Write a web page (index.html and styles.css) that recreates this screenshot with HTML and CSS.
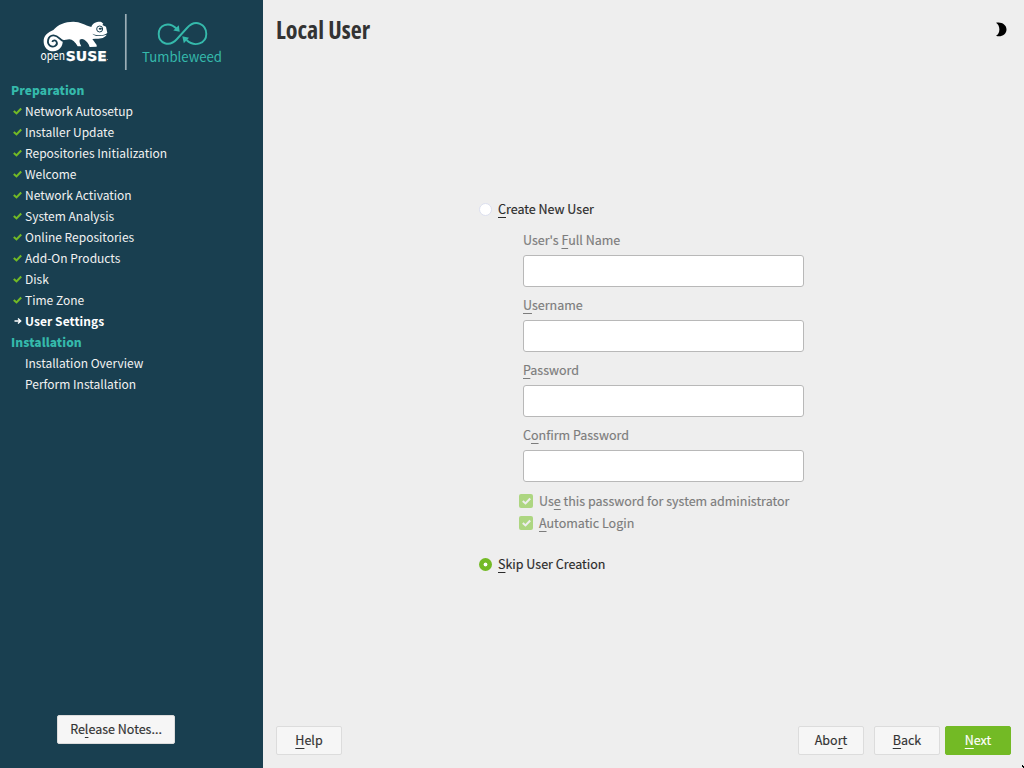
FILE: index.html
```html
<!DOCTYPE html>
<html lang="en">
<head>
<meta charset="utf-8">
<title>Local User</title>
<link rel="stylesheet" href="styles.css">
</head>
<body>
<svg class="defs" width="0" height="0"><defs>
<symbol id="check" viewBox="0 0 9 8"><path d="M.8 3.9 3.5 6.4 8.2 1.5" fill="none" stroke="currentColor" stroke-width="2.1"/></symbol>
</defs></svg>
<div class="installer">
<aside class="sidebar">
<svg class="brand" width="263" height="79" viewBox="0 0 263 79">
<g transform="translate(30 5) scale(.33333)">
<path fill="#fff" d="M41 111C40 92 53 82 70 75C84 59 104 50 130 50C151 50 164 60 184 66C187 55 202 49 214 51L220 56L217 60L228 65L232 84C222 92 204 94 187 86C194 95 213 94 230 89C225 99 209 102 196 101L187 102L200 120L200 125L179 126C176 115 169 108 163 104C158 101 154 101 149 104C147 113 152 119 154 124L143 124C137 113 127 103 118 103L98 106C100 123 88 139 70 139C53 139 42 127 41 111Z"/>
<path fill="none" stroke="#193f50" stroke-width="5.500" d="M102 108C91 110 87 90 70 91C52 92 50 115 60 122C70 129 84 121 80 111C77 104 68 105 67 111"/>
<circle cx="209" cy="72" r="9" fill="#fff" stroke="#193f50" stroke-width="3"/>
<ellipse cx="211" cy="71" rx="5" ry="3" fill="#193f50"/>
</g>
<text class="open-word" x="40.500" y="60" textLength="24.500" lengthAdjust="spacingAndGlyphs">open</text>
<text class="suse-word" x="65.800" y="60.500" textLength="41" lengthAdjust="spacingAndGlyphs">SUSE</text>
<circle cx="107.500" cy="59.500" r=".6" fill="#a3b2b9"/>
<path d="M125.800 14V70" stroke="#9caeb6" stroke-width="1.700"/>
<g fill="none" stroke="#35b9ab" stroke-width="1.900">
<path d="M177 29C168 20 158.700 26 158.700 34C158.700 43 169 48 177 39L187 28C196 18 206.300 25 206.300 34C206.300 43 195 48 186.500 40"/>
</g>
<path d="M179.700 31.800 173.300 30.500 178.800 25.300ZM182.300 36.300 189 37.800 183.800 43.300Z" fill="#35b9ab"/>
<text class="edition" x="142" y="61.700" textLength="80" lengthAdjust="spacingAndGlyphs">Tumbleweed</text>
</svg>
<ul class="steps">
<li class="heading">Preparation</li>
<li><svg class="mark"><use href="#check"/></svg>Network Autosetup</li>
<li><svg class="mark"><use href="#check"/></svg>Installer Update</li>
<li><svg class="mark"><use href="#check"/></svg>Repositories Initialization</li>
<li><svg class="mark"><use href="#check"/></svg>Welcome</li>
<li><svg class="mark"><use href="#check"/></svg>Network Activation</li>
<li><svg class="mark"><use href="#check"/></svg>System Analysis</li>
<li><svg class="mark"><use href="#check"/></svg>Online Repositories</li>
<li><svg class="mark"><use href="#check"/></svg>Add-On Products</li>
<li><svg class="mark"><use href="#check"/></svg>Disk</li>
<li><svg class="mark"><use href="#check"/></svg>Time Zone</li>
<li class="current"><svg class="mark" viewBox="0 0 9 8"><path d="M1.500 4H8M5 1.500 7.700 4 5 6.500" fill="none" stroke="#fff" stroke-width="1.400"/></svg>User Settings</li>
<li class="heading">Installation</li>
<li>Installation Overview</li>
<li>Perform Installation</li>
</ul>
<button class="button release">Re<u>l</u>ease Notes...</button>
</aside>
<main class="content">
<header class="header">
<h1 class="title">Local User</h1>
<svg class="moon" width="11" height="15" viewBox="0 0 11 15"><path d="M0 .8C5-.6 10.500 2.500 10.500 7.400C10.500 12.500 5 15.500 0 13.700C4.500 11.500 4.500 3.500 0 .8Z"/></svg>
</header>
<form class="form">
<label class="choice"><span class="radio"></span><span class="caption"><u>C</u>reate New User</span></label>
<div class="fields">
<label class="field"><span>User's <u>F</u>ull Name</span><input class="input" disabled></label>
<label class="field"><span><u>U</u>sername</span><input class="input" disabled></label>
<label class="field"><span><u>P</u>assword</span><input class="input" disabled></label>
<label class="field"><span>C<u>o</u>nfirm Password</span><input class="input" disabled></label>
</div>
<div class="options">
<label class="option"><span class="box"><svg width="9" height="8"><use href="#check"/></svg></span><span class="caption">Us<u>e</u> this password for system administrator</span></label>
<label class="option"><span class="box"><svg width="9" height="8"><use href="#check"/></svg></span><span class="caption"><u>A</u>utomatic Login</span></label>
</div>
<label class="choice skip"><span class="radio selected"></span><span class="caption"><u>S</u>kip User Creation</span></label>
</form>
<footer class="footer">
<button class="button help"><u>H</u>elp</button>
<button class="button">Abo<u>r</u>t</button>
<button class="button back"><u>B</u>ack</button>
<button class="button next"><u>N</u>ext</button>
</footer>
<svg class="pointer" width="2" height="3"><path d="M0 0H1V1H2V3H1V2H0Z"/></svg>
</main>
</div>
</body>
</html>
```
FILE: styles.css
```css
* { box-sizing: border-box; }
body { margin: 0; font: 400 12.5px/21px "Noto Sans CJK SC", sans-serif; color: #2b2b2b; }
.defs { position: absolute; }
.installer { display: flex; width: 1024px; height: 768px; overflow: hidden; }
.sidebar { width: 263px; background: #193f50; color: #f2f2f2; display: flex; flex-direction: column; align-items: flex-start; }
.brand { display: block; flex: none; }
.open-word { font: 400 12px "Noto Sans CJK SC", sans-serif; fill: #fff; }
.suse-word { font: 700 13.5px "DejaVu Sans", sans-serif; fill: #fff; stroke: #fff; stroke-width: .25px; }
.edition { font: 400 13.5px "Noto Sans CJK SC", sans-serif; fill: #35b9ab; }
.steps { list-style: none; margin: 0; padding: 0; font-size: 12px; }
.steps li { height: 21px; padding-left: 25px; white-space: nowrap; display: flex; align-items: center; }
.steps .heading { padding-left: 11px; font-weight: 900; color: #35b9ab; letter-spacing: .07px; }
.steps .current { font-weight: 700; color: #fff; letter-spacing: .07px; }
.mark { width: 9px; height: 8px; margin: 0 3px 0 -12px; color: #73ba25; }
u { text-decoration: underline; text-decoration-thickness: 1px; text-underline-offset: 3px; text-decoration-skip-ink: none; }
.button { width: 66px; height: 29px; padding: 0 0 2px; border: 1px solid #dcdcdc; border-radius: 2px; background: #f6f6f6; color: #333; font: inherit; -webkit-text-stroke: .15px; }
.release { width: 118px; margin: auto 0 24px 57px; }
.content { position: relative; flex: 1; background: #eee; display: flex; flex-direction: column; }
.header { height: 60px; padding: 13px 17px 0 13px; display: flex; justify-content: space-between; }
.title { margin: 0; font: 700 24px/34px "Open Sans", sans-serif; font-stretch: 75%; white-space: nowrap; color: #333; }
.moon { margin-top: 9px; }
.form { padding: 139px 0 0 216px; flex: 1; -webkit-text-stroke: .15px; }
.choice { display: flex; align-items: center; gap: 6px; height: 21px; }
.caption { padding-bottom: 2px; }
.radio { width: 13px; height: 13px; border: 1px solid #dce0ef; border-radius: 50%; background: #fff; }
.selected { border: 0; background: radial-gradient(circle, #fff 1.5px, #73ba25 2.3px); }
.fields { padding: 9px 0 1px 44px; color: #7c7c7c; }
.field { display: flex; flex-direction: column; height: 65px; }
.input { width: 281px; height: 32px; margin-top: 5px; border: 1px solid #b8b8b8; border-radius: 3px; background: #fff; }
.options { padding-left: 40px; color: #7c7c7c; }
.option { display: flex; align-items: center; gap: 6px; height: 22px; }
.box { width: 14px; height: 14px; border-radius: 2px; background: #add681; color: #eee; display: flex; align-items: center; justify-content: center; }
.skip { margin-top: 20px; }
.footer { display: flex; padding: 0 13px 13px; }
.help { margin-right: auto; }
.back { margin: 0 5px 0 10px; }
.next { border-color: #73ba25; background: #73ba25; color: #fff; }
.pointer { position: absolute; right: 0; bottom: 0; }
```
